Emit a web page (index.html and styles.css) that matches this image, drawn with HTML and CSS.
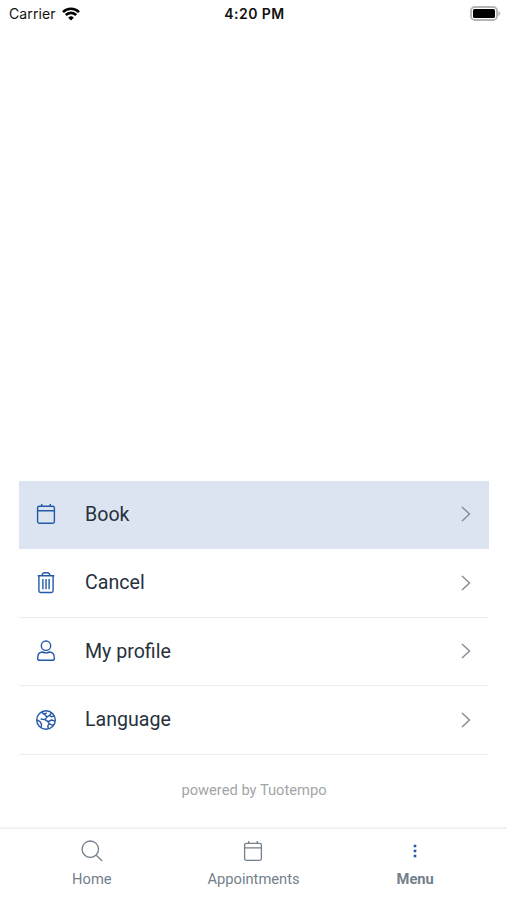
FILE: index.html
```html
<!DOCTYPE html>
<html lang="en">
<head>
<meta charset="utf-8">
<title>Menu</title>
<link rel="stylesheet" href="styles.css">
</head>
<body>
<svg class="defs" aria-hidden="true">
  <symbol id="calendar" viewBox="0 0 24 24"><rect x="3.6" y="4.3" width="16.8" height="17" rx="1.7"/><path d="M3.6 8.8h16.8M7.7 2.1v2.2M16.3 2.1v2.2"/></symbol>
  <symbol id="chevron" viewBox="0 0 12 18"><path d="M2 2l7.500 7L2 16"/></symbol>
</svg>
<div class="screen">
  <header class="status">
    <div class="carrier"><span>Carrier</span>
      <svg class="wifi" viewBox="0 0 18 14"><path d="M1 5.1a11.4 11.4 0 0 1 16 0M3.8 8a7.4 7.4 0 0 1 10.4 0"/><path class="solid" d="M9 13.6L6.2 10.7a4 4 0 0 1 5.6 0z"/></svg>
    </div>
    <div class="time">4:20 PM</div>
    <svg class="battery" viewBox="0 0 31 15"><rect class="case" x="1" y="1" width="26" height="13" rx="3.8"/><rect class="charge" x="3" y="3" width="22" height="9" rx="1.600"/><path class="tip" d="M28.300 5q2 .8 2 2.500t-2 2.500z"/></svg>
  </header>
  <main class="content">
    <nav class="list">
      <a class="row selected"><svg class="icon"><use href="#calendar"/></svg><span class="label">Book</span><svg class="chevron"><use href="#chevron"/></svg></a>
      <a class="row"><svg class="icon" viewBox="0 0 24 24"><path d="M4.900 5v14.800q0 1.700 1.700 1.700h10.800q1.700 0 1.700-1.700V5M3.700 4.800h16.600M7.900 4.600q.8-2.800 2.700-2.800h2.800q1.900 0 2.700 2.800M8.900 7.900v10.300M12 7.900v10.300M15.100 7.900v10.300"/></svg><span class="label">Cancel</span><svg class="chevron"><use href="#chevron"/></svg></a>
      <a class="row"><svg class="icon" viewBox="0 0 24 24"><circle cx="12" cy="6.700" r="4.700"/><path d="M8.200 13C5.300 13.300 3.600 16 3.600 19.200q0 2.100 2 2.100h12.800q2 0 2-2.100c0-3.200-1.700-5.900-4.600-6.200q-3.800 1.800-7.600 0z"/></svg><span class="label">My profile</span><svg class="chevron"><use href="#chevron"/></svg></a>
      <a class="row"><svg class="icon" viewBox="0 0 24 24"><circle cx="12" cy="12" r="9.300"/><path d="M7.500 4.100l2.600 2 2.600-1.100M10.100 6.100l2.900 2.800-2 2.700-4.400-.6M17.800 4.900l-2.300 2.400 1.700 1.500 3.500-.9M15.500 7.300L13 8.900M3 11.900l3 1.800 1.600 2.700-.6 3.200M11 11.600l3 2 3.600-1.600 3.500 1.200M14 13.600l1.300 2.300 3.900 1.500M15.300 15.900l-1.500 1.700.5 3.300"/></svg><span class="label">Language</span><svg class="chevron"><use href="#chevron"/></svg></a>
    </nav>
    <p class="powered">powered by Tuotempo</p>
  </main>
  <nav class="tabs">
    <a class="tab"><svg class="icon" viewBox="0 0 24 24"><circle cx="10.300" cy="10.200" r="8.200"/><path d="M16.200 16.200l6 5.800"/></svg><span>Home</span></a>
    <a class="tab"><svg class="icon"><use href="#calendar"/></svg><span>Appointments</span></a>
    <a class="tab active"><svg class="icon dots" viewBox="0 0 24 24"><path d="M10.700 5.700h2.600v2.600h-2.600zM10.700 10.700h2.600v2.600h-2.600zM10.700 15.700h2.600v2.600h-2.600z"/></svg><span>Menu</span></a>
  </nav>
</div>
</body>
</html>
```
FILE: styles.css
```css
body { margin: 0; background: #fff; font-family: Roboto, sans-serif; }
* { box-sizing: border-box; }
.defs { position: absolute; width: 0; height: 0; }
.screen { height: 900px; display: flex; flex-direction: column; overflow: hidden; }
svg { fill: none; stroke: currentColor; flex: none; display: block; }

.status { height: 27px; display: grid; grid-template-columns: 1fr auto 1fr; align-items: center; padding: 0 6px 0 9px; font-family: Inter, sans-serif; font-size: 14px; color: #111; }
.carrier { display: flex; align-items: center; gap: 6px; letter-spacing: .12px; }
.wifi { width: 18px; height: 14px; stroke: #000; stroke-width: 2.6; }
.wifi .solid { fill: #000; stroke: none; }
.time { font-weight: 600; letter-spacing: .45px; margin-left: -1px; }
.battery { width: 31px; height: 15px; justify-self: end; }
.case { stroke: #b5b5b5; stroke-width: 1.9; }
.charge { fill: #000; stroke: none; }
.tip { fill: #b5b5b5; stroke: none; }

.content { flex: 1; display: flex; flex-direction: column; justify-content: flex-end; padding: 0 18px 0 19px; }
.row { height: 68.5px; display: flex; align-items: center; padding: 0 17px 0 15px; border-bottom: 1px solid #ebecee; color: #2459a9; }
.selected { background: #dce4f1; border-color: #dce4f1; }
.icon { width: 24px; height: 24px; stroke-width: 1.4; stroke-linejoin: round; }
.label { flex: 1; margin-left: 27px; font-size: 19.6px; color: #27313c; }
.chevron { width: 12px; height: 18px; color: #858b94; stroke-width: 1.4; }
.powered { margin: 0; height: 73.5px; line-height: 71px; text-align: center; font-size: 14.7px; color: #a2a5a8; }

.tabs { height: 72px; display: grid; grid-template-columns: repeat(3, 1fr); padding: 0 11px; border-top: 1px solid #eee; box-shadow: 0 -1px 2px #0000000d; color: #737f8c; font-size: 14.7px; line-height: 20px; }
.tab { display: flex; flex-direction: column; align-items: center; gap: 6px; padding-top: 10px; }
.tab .icon { stroke-width: 1.3; }
.active { font-weight: 700; }
.tab .dots { fill: #2459a9; stroke: none; }
```
